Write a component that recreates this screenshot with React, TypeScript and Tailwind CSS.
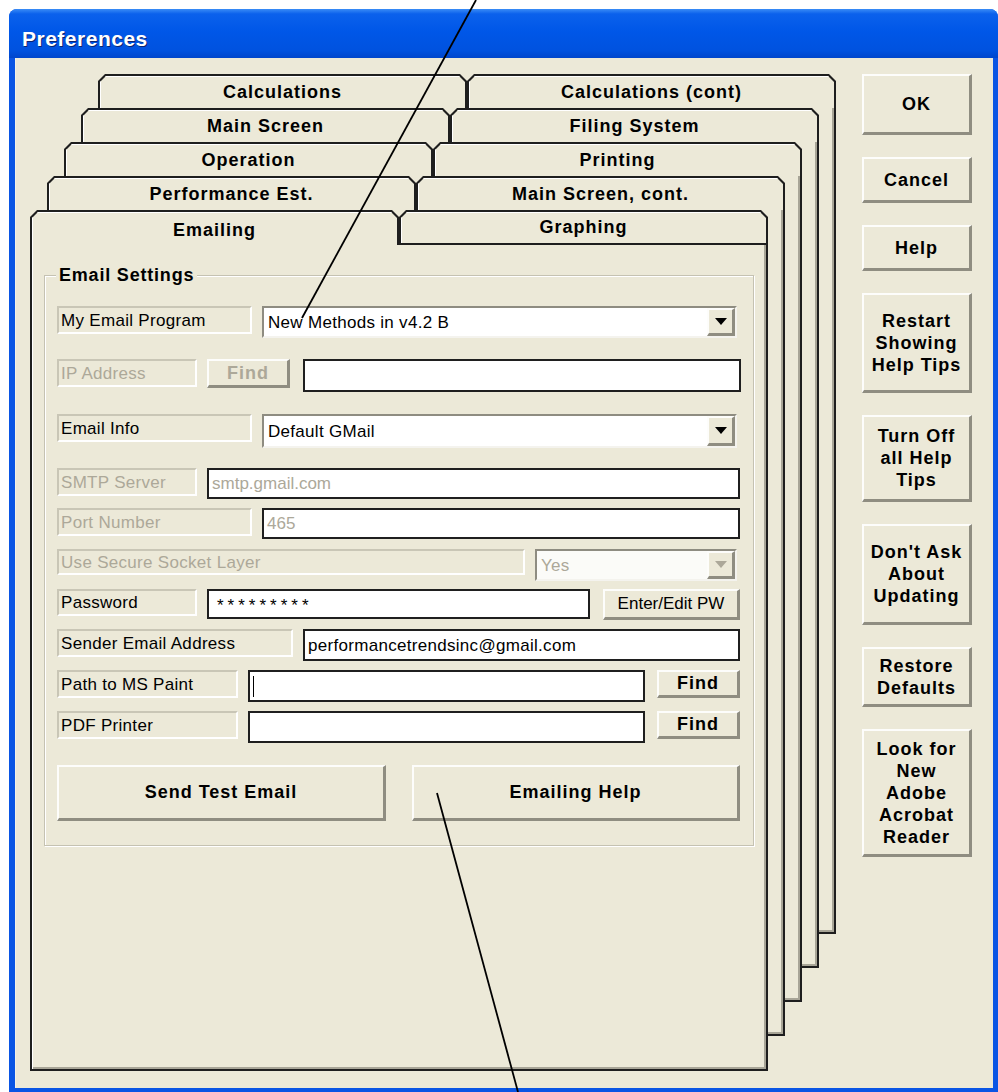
import React from "react";

// XP-style "Preferences" dialog with stacked tab pages and two annotation lines

const raised =
  "border-t-2 border-l-2 border-t-[#fdfdfb] border-l-[#fdfdfb] border-b-[3px] border-r-[3px] border-b-[#8f8d81] border-r-[#8f8d81] bg-[#ece9d8]";

const staticBox =
  "flex items-center border-2 border-t-[#c9c6b6] border-l-[#c9c6b6] border-b-white border-r-white pl-[2px] text-[17px] leading-none tracking-[0.3px]";

const textBox =
  "flex items-center border-2 border-[#1f1f1f] bg-white pl-[3px] text-[17px] leading-none";

type TabProps = { label: string; selected?: boolean; bottom?: boolean };

const Tab = ({ label, selected, bottom }: TabProps) => (
  <div
    className={`h-full w-[369px] bg-[#1e1e1e] px-[2px] pt-[2px] ${
      bottom ? "pb-[2px]" : ""
    } [clip-path:polygon(7px_0,calc(100%_-_7px)_0,100%_7px,100%_100%,0_100%,0_7px)]`}
  >
    <div
      className={`flex h-full items-center justify-center bg-[#ece9d8] text-[18px] font-bold tracking-[1px] text-black shadow-[inset_1px_1px_0_#fff] [clip-path:polygon(6px_0,calc(100%_-_6px)_0,100%_6px,100%_100%,0_100%,0_6px)] ${
        selected ? "pt-[4px]" : ""
      }`}
    >
      {label}
    </div>
  </div>
);

const backPages = [
  { left: "Calculations", right: "Calculations (cont)", pos: "ml-[68px] mt-0" },
  { left: "Main Screen", right: "Filing System", pos: "ml-[51px] mt-[34px]" },
  { left: "Operation", right: "Printing", pos: "ml-[34px] mt-[68px]" },
  { left: "Performance Est.", right: "Main Screen, cont.", pos: "ml-[17px] mt-[102px]" },
];

const Combo = ({
  value,
  width,
  height,
  disabled,
}: {
  value: string;
  width: string;
  height: string;
  disabled?: boolean;
}) => (
  <div
    className={`flex items-stretch border-2 border-t-[#8e8c81] border-l-[#8e8c81] border-b-[#f4f3ee] border-r-[#f4f3ee] ${
      disabled ? "bg-[#fbfbf8]" : "bg-white"
    } ${width} ${height}`}
  >
    <div
      className={`flex flex-1 items-center pl-[4px] text-[17px] leading-none tracking-[0.3px] ${
        disabled ? "text-[#aca899]" : "text-black"
      }`}
    >
      {value}
    </div>
    <div className={`flex w-[28px] items-center justify-center ${raised}`}>
      <svg width="12" height="7" viewBox="0 0 12 7">
        <polygon points="0,0 12,0 6,7" fill={disabled ? "#aca899" : "#000"} />
      </svg>
    </div>
  </div>
);

const sideButtons = [
  { h: "h-[61px]", lines: ["OK"] },
  { h: "h-[46px]", lines: ["Cancel"] },
  { h: "h-[46px]", lines: ["Help"] },
  { h: "h-[100px]", lines: ["Restart", "Showing", "Help Tips"] },
  { h: "h-[87px]", lines: ["Turn Off", "all Help", "Tips"] },
  { h: "h-[101px]", lines: ["Don't Ask", "About", "Updating"] },
  { h: "h-[60px]", lines: ["Restore", "Defaults"] },
  { h: "h-[128px]", lines: ["Look for", "New", "Adobe", "Acrobat", "Reader"] },
];

const App = () => {
  return (
    <div className="relative h-[1092px] w-[998px] overflow-hidden bg-white font-['Liberation_Sans',Arial,sans-serif] text-black">
      <div className="ml-[9px] mt-[9px] flex h-[1083px] w-[989px] flex-col overflow-hidden rounded-t-[8px] bg-[#0a55e4]">
        {/* title bar */}
        <div className="flex h-[49px] items-center bg-[linear-gradient(to_bottom,#3a8cf6_0%,#0b61ec_10%,#0057e8_45%,#0052df_85%,#0046cc_100%)] pl-[13px] pt-[10px]">
          <span className="text-[21px] font-bold tracking-[0.5px] text-white [text-shadow:1px_1px_0_#0a2470]">
            Preferences
          </span>
        </div>

        {/* frame */}
        <div className="flex flex-1 bg-[#0a55e4] pb-[4px] pl-[6px] pr-[5px]">
          <div className="flex flex-1 border-l border-[#f4f2e8] bg-[#ece9d8] pl-[14px] pt-[16px]">
            {/* tab stack */}
            <div className="grid h-[997px] w-[806px]">
              {backPages.map((p) => (
                <div
                  key={p.left}
                  className={`col-start-1 row-start-1 flex h-[860px] w-[738px] flex-col ${p.pos}`}
                >
                  <div className="flex h-[34px]">
                    <Tab label={p.left} />
                    <Tab label={p.right} />
                  </div>
                  <div className="flex-1 border-x-2 border-b-2 border-[#1e1e1e] bg-[#ece9d8] shadow-[inset_-2px_-2px_0_#a8a597]" />
                </div>
              ))}

              {/* front page */}
              <div className="col-start-1 row-start-1 ml-0 mt-[136px] flex h-[861px] w-[738px] flex-col">
                <div className="flex h-[35px]">
                  <Tab label="Emailing" selected />
                  <Tab label="Graphing" bottom />
                </div>
                <div className="flex-1 border-x-2 border-b-2 border-[#1e1e1e] bg-[#ece9d8] px-[12px] pt-[19px] shadow-[inset_1px_0_0_#fff,inset_-2px_-2px_0_#a8a597]">
                  <fieldset className="border border-[#c5c2b2] px-[12px] pb-[24px] shadow-[inset_1px_1px_0_#fff,1px_1px_0_#fff]">
                    <legend className="-ml-[1px] bg-[#ece9d8] px-[3px] text-[18px] font-bold leading-[22px] tracking-[0.8px]">
                      Email Settings
                    </legend>

                    {/* My Email Program */}
                    <div className="mt-[20px] flex items-start gap-[10px]">
                      <div className={`${staticBox} h-[28px] w-[195px]`}>My Email Program</div>
                      <Combo value="New Methods in v4.2 B" width="w-[475px]" height="h-[32px]" />
                    </div>

                    {/* IP Address */}
                    <div className="mt-[21px] flex items-start">
                      <div className={`${staticBox} h-[28px] w-[140px] text-[#aca899]`}>IP Address</div>
                      <div
                        className={`${raised} ml-[10px] flex h-[29px] w-[83px] items-center justify-center text-[18px] font-bold tracking-[1px] text-[#aca899]`}
                      >
                        Find
                      </div>
                      <div className={`${textBox} ml-[13px] h-[33px] w-[438px]`} />
                    </div>

                    {/* Email Info */}
                    <div className="mt-[22px] flex items-start gap-[10px]">
                      <div className={`${staticBox} h-[28px] w-[195px]`}>Email Info</div>
                      <Combo value="Default GMail" width="w-[475px]" height="h-[34px]" />
                    </div>

                    {/* SMTP Server */}
                    <div className="mt-[20px] flex items-start gap-[10px]">
                      <div className={`${staticBox} h-[28px] w-[140px] text-[#aca899]`}>SMTP Server</div>
                      <div className={`${textBox} h-[31px] w-[533px] text-[#aca899]`}>smtp.gmail.com</div>
                    </div>

                    {/* Port Number */}
                    <div className="mt-[9px] flex items-start gap-[10px]">
                      <div className={`${staticBox} h-[28px] w-[195px] text-[#aca899]`}>Port Number</div>
                      <div className={`${textBox} h-[31px] w-[478px] text-[#aca899]`}>465</div>
                    </div>

                    {/* SSL */}
                    <div className="mt-[10px] flex items-start gap-[10px]">
                      <div className={`${staticBox} h-[26px] w-[468px] text-[#aca899]`}>Use Secure Socket Layer</div>
                      <Combo value="Yes" width="w-[202px]" height="h-[32px]" disabled />
                    </div>

                    {/* Password */}
                    <div className="mt-[8px] flex items-start">
                      <div className={`${staticBox} h-[27px] w-[140px]`}>Password</div>
                      <div className={`${textBox} ml-[10px] h-[30px] w-[383px] !items-start pl-[8px] pt-[6px] text-[14px] tracking-[4px]`}>
                        *********
                      </div>
                      <div
                        className={`${raised} ml-[13px] flex h-[31px] w-[137px] items-center justify-center text-[17px]`}
                      >
                        Enter/Edit PW
                      </div>
                    </div>

                    {/* Sender Email Address */}
                    <div className="mt-[9px] flex items-start gap-[10px]">
                      <div className={`${staticBox} h-[28px] w-[236px]`}>Sender Email Address</div>
                      <div className={`${textBox} h-[32px] w-[437px] tracking-[0.3px]`}>
                        performancetrendsinc@gmail.com
                      </div>
                    </div>

                    {/* Path to MS Paint */}
                    <div className="mt-[9px] flex items-start">
                      <div className={`${staticBox} h-[28px] w-[181px]`}>Path to MS Paint</div>
                      <div className={`${textBox} ml-[10px] h-[32px] w-[397px]`}>
                        <span className="h-[21px] w-px bg-black" />
                      </div>
                      <div
                        className={`${raised} ml-[12px] flex h-[28px] w-[83px] items-center justify-center text-[18px] font-bold tracking-[1px]`}
                      >
                        Find
                      </div>
                    </div>

                    {/* PDF Printer */}
                    <div className="mt-[9px] flex items-start">
                      <div className={`${staticBox} h-[28px] w-[181px]`}>PDF Printer</div>
                      <div className={`${textBox} ml-[10px] h-[32px] w-[397px]`} />
                      <div
                        className={`${raised} ml-[12px] flex h-[28px] w-[83px] items-center justify-center text-[18px] font-bold tracking-[1px]`}
                      >
                        Find
                      </div>
                    </div>

                    {/* action buttons */}
                    <div className="mt-[22px] flex items-start gap-[26px]">
                      <div
                        className={`${raised} flex h-[56px] w-[329px] items-center justify-center text-[18px] font-bold tracking-[1px]`}
                      >
                        Send Test Email
                      </div>
                      <div
                        className={`${raised} flex h-[56px] w-[328px] items-center justify-center text-[18px] font-bold tracking-[1px]`}
                      >
                        Emailing Help
                      </div>
                    </div>
                  </fieldset>
                </div>
              </div>
            </div>

            {/* side buttons */}
            <div className="ml-[26px] flex w-[110px] flex-col gap-[22px]">
              {sideButtons.map((b) => (
                <div
                  key={b.lines.join(" ")}
                  className={`${raised} ${b.h} flex flex-col items-center justify-center text-center text-[18px] font-bold leading-[22px] tracking-[1px]`}
                >
                  {b.lines.map((l) => (
                    <span key={l}>{l}</span>
                  ))}
                </div>
              ))}
            </div>
          </div>
        </div>
      </div>

      {/* annotation lines */}
      <svg
        className="pointer-events-none absolute inset-0"
        width="998"
        height="1092"
        viewBox="0 0 998 1092"
      >
        <line x1="476" y1="0" x2="302" y2="318" stroke="#000" strokeWidth="1.8" />
        <line x1="437" y1="793" x2="518" y2="1092" stroke="#000" strokeWidth="1.8" />
      </svg>
    </div>
  );
};

export default App;
